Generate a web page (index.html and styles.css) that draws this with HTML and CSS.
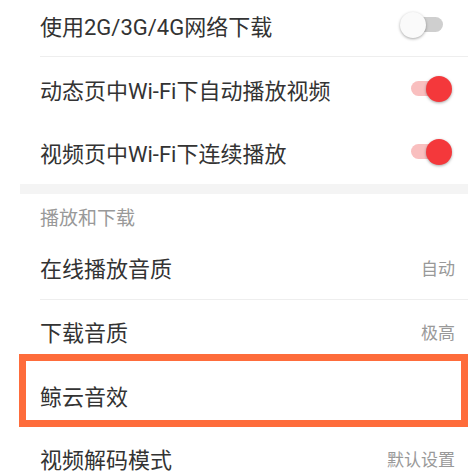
FILE: index.html
```html
<!DOCTYPE html>
<html lang="zh-CN">
<head>
<meta charset="utf-8">
<title>设置</title>
<link rel="stylesheet" href="styles.css">
</head>
<body>
<div class="page">
  <div class="row sep">
    <span class="label">使用2G/3G/4G网络下载</span>
    <span class="switch"><span class="track"></span><span class="knob"></span></span>
  </div>
  <div class="row">
    <span class="label">动态页中Wi-Fi下自动播放视频</span>
    <span class="switch on"><span class="track"></span><span class="knob"></span></span>
  </div>
  <div class="row">
    <span class="label">视频页中Wi-Fi下连续播放</span>
    <span class="switch on"><span class="track"></span><span class="knob"></span></span>
  </div>
  <div class="band"></div>
  <div class="header">播放和下载</div>
  <div class="row sep">
    <span class="label">在线播放音质</span>
    <span class="value">自动</span>
  </div>
  <div class="row">
    <span class="label">下载音质</span>
    <span class="value">极高</span>
  </div>
  <div class="row highlight">
    <span class="label">鲸云音效</span>
  </div>
  <div class="row">
    <span class="label">视频解码模式</span>
    <span class="value">默认设置</span>
  </div>
</div>
</body>
</html>
```
FILE: styles.css
```css
html, body {
  margin: 0;
  padding: 0;
  background: #ffffff;
}
body {
  width: 468px;
  height: 472px;
  overflow: hidden;
  font-family: Roboto, "Noto Sans CJK SC", sans-serif;
}
.page {
  margin-top: -6.5px;
  margin-left: 20px;
  display: flex;
  flex-direction: column;
}
.row {
  position: relative;
  height: 63.5px;
  margin-left: 20px;
  padding-right: 13px;
  box-sizing: border-box;
  display: flex;
  align-items: center;
  justify-content: space-between;
}
.row.sep {
  border-bottom: 1px solid #eeeeee;
}
.label {
  font-size: 22px;
  color: #333333;
  white-space: nowrap;
}
.value {
  font-size: 17px;
  color: #999999;
}
.band {
  height: 10px;
  background: #f4f4f4;
}
.header {
  height: 42px;
  padding-left: 20px;
  padding-top: 3px;
  box-sizing: border-box;
  display: flex;
  align-items: center;
  font-size: 19px;
  color: #999999;
}
.switch {
  position: relative;
  width: 52px;
  height: 26px;
  margin-right: 3px;
  flex: none;
}
.track {
  position: absolute;
  left: 11px;
  top: 5px;
  width: 32px;
  height: 15px;
  border-radius: 8px;
  background: #cfcfcf;
}
.knob {
  position: absolute;
  left: 0;
  top: 0;
  width: 26px;
  height: 26px;
  border-radius: 50%;
  background: #fafafa;
  box-shadow: 0 1px 3px rgba(0, 0, 0, 0.35);
}
.switch.on .track {
  background: #f9bfbf;
}
.switch.on .knob {
  left: auto;
  right: 0;
  background: #f4383b;
}
.highlight::before {
  content: "";
  position: absolute;
  left: -21px;
  right: 0;
  top: -9px;
  bottom: 0;
  border: 7px solid #fe6c3b;
  pointer-events: none;
}
```
